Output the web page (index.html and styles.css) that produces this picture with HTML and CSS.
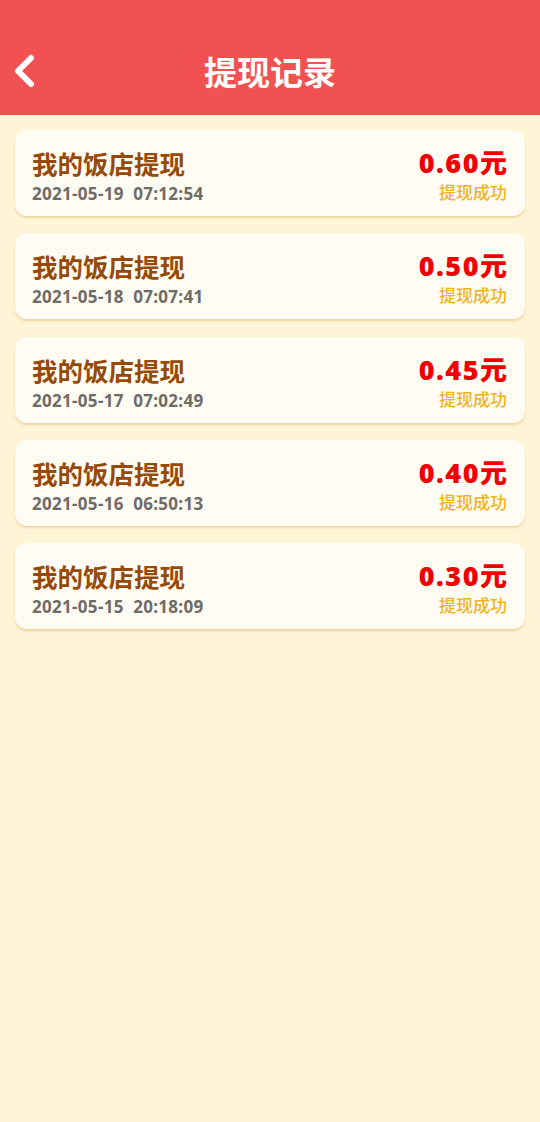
FILE: index.html
```html
<!DOCTYPE html>
<html lang="zh-CN">
<head>
<meta charset="utf-8">
<title>提现记录</title>
<link rel="stylesheet" href="styles.css">
</head>
<body>
<header class="topbar">
  <a class="back" href="#" aria-label="返回">
    <svg width="26" height="38" viewBox="0 0 26 38"><polyline points="20,6 7,19 20,32" fill="none" stroke="#fff" stroke-width="6" stroke-linecap="round" stroke-linejoin="round"/></svg>
  </a>
  <h1 class="title">提现记录</h1>
  <span class="spacer"></span>
</header>
<main class="list">
  <div class="card">
    <div class="info"><div class="name">我的饭店提现</div><div class="time">2021-05-19&nbsp;&nbsp;07:12:54</div></div>
    <div class="result"><div class="amount">0.60元</div><div class="status">提现成功</div></div>
  </div>
  <div class="card">
    <div class="info"><div class="name">我的饭店提现</div><div class="time">2021-05-18&nbsp;&nbsp;07:07:41</div></div>
    <div class="result"><div class="amount">0.50元</div><div class="status">提现成功</div></div>
  </div>
  <div class="card">
    <div class="info"><div class="name">我的饭店提现</div><div class="time">2021-05-17&nbsp;&nbsp;07:02:49</div></div>
    <div class="result"><div class="amount">0.45元</div><div class="status">提现成功</div></div>
  </div>
  <div class="card">
    <div class="info"><div class="name">我的饭店提现</div><div class="time">2021-05-16&nbsp;&nbsp;06:50:13</div></div>
    <div class="result"><div class="amount">0.40元</div><div class="status">提现成功</div></div>
  </div>
  <div class="card">
    <div class="info"><div class="name">我的饭店提现</div><div class="time">2021-05-15&nbsp;&nbsp;20:18:09</div></div>
    <div class="result"><div class="amount">0.30元</div><div class="status">提现成功</div></div>
  </div>
</main>
</body>
</html>
```
FILE: styles.css
```css
html, body {
  margin: 0;
  padding: 0;
}
body {
  background: #fef4d6;
  min-height: 1122px;
  font-family: "Open Sans", "Noto Sans CJK SC", sans-serif;
}
.topbar {
  height: 115px;
  background: #f25151;
  display: grid;
  grid-template-columns: 60px 1fr 60px;
  align-items: center;
  padding-top: 27px;
  box-sizing: border-box;
}
.back {
  display: flex;
  padding-left: 11px;
}
.title {
  margin: 0;
  text-align: center;
  color: #fff;
  font-family: "Noto Sans CJK SC", sans-serif;
  font-weight: 700;
  font-size: 33px;
  line-height: 40px;
}
.list {
  display: flex;
  flex-direction: column;
  gap: 17.3px;
  padding: 15px 15px;
}
.card {
  height: 86px;
  box-sizing: border-box;
  background: #fffcf3;
  border-radius: 12px;
  box-shadow: 0 2px 2px rgba(214, 170, 90, 0.4);
  display: flex;
  justify-content: space-between;
  padding: 18px 17px 0 17px;
}
.name {
  font-family: "Noto Sans CJK SC", sans-serif;
  font-weight: 700;
  font-size: 25.5px;
  line-height: 30px;
  color: #974a06;
}
.time {
  margin-top: 5px;
  font-weight: 700;
  font-size: 17px;
  letter-spacing: 0.3px;
  line-height: 21px;
  color: #6e6b68;
}
.result {
  text-align: right;
  padding-right: 1px;
}
.amount {
  font-weight: 800;
  font-size: 27px;
  letter-spacing: 1.5px;
  margin-right: -1.5px;
  line-height: 30px;
  color: #f00000;
}
.amount, .status {
  font-family: "Open Sans", "Noto Sans CJK SC", sans-serif;
}
.status {
  margin-top: 3px;
  font-family: "Noto Sans CJK SC", sans-serif;
  font-weight: 500;
  font-size: 17px;
  line-height: 22px;
  color: #f4b21a;
}
```
